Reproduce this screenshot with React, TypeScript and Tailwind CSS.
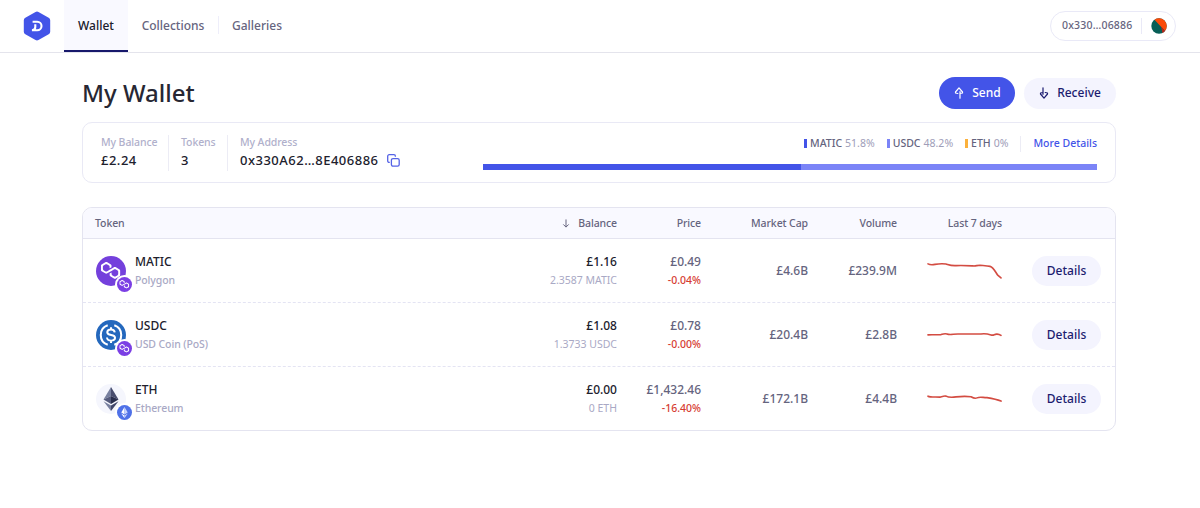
import type { ReactNode } from "react";

type Token = {
  symbol: string;
  name: string;
  balance: string;
  amount: string;
  price: string;
  change: string;
  marketCap: string;
  volume: string;
  chart: string;
  icon: ReactNode;
  badge: ReactNode;
};

const POLYGON_PATH =
  "M29,10.2c-0.7-0.4-1.6-0.4-2.4,0L21,13.5l-3.8,2.1l-5.5,3.3c-0.7,0.4-1.6,0.4-2.4,0L5,16.3c-0.7-0.4-1.2-1.2-1.2-2.1v-5c0-0.8,0.4-1.6,1.2-2.1l4.3-2.5c0.7-0.4,1.6-0.4,2.4,0L16,7.2c0.7,0.4,1.2,1.2,1.2,2.1v3.3l3.8-2.2V7c0-0.8-0.4-1.6-1.2-2.1l-8-4.7c-0.7-0.4-1.6-0.4-2.4,0L1.2,5C0.4,5.4,0,6.2,0,7v9.4c0,0.8,0.4,1.6,1.2,2.1l8.1,4.7c0.7,0.4,1.6,0.4,2.4,0l5.5-3.2l3.8-2.2l5.5-3.2c0.7-0.4,1.6-0.4,2.4,0l4.3,2.5c0.7,0.4,1.2,1.2,1.2,2.1v5c0,0.8-0.4,1.6-1.2,2.1L29,28.8c-0.7,0.4-1.6,0.4-2.4,0l-4.3-2.5c-0.7-0.4-1.2-1.2-1.2-2.1V21l-3.8,2.2v3.3c0,0.8,0.4,1.6,1.2,2.1l8.1,4.7c0.7,0.4,1.6,0.4,2.4,0l8.1-4.7c0.7-0.4,1.2-1.2,1.2-2.1V17c0-0.8-0.4-1.6-1.2-2.1L29,10.2z";

const PolygonIcon = ({ color = "#7440dc" }: { color?: string }) => (
  <svg viewBox="0 0 60 60" className="h-full w-full">
    <circle cx="30" cy="30" r="30" fill={color} />
    <path d={POLYGON_PATH} fill="#fff" transform="translate(10 12)" />
  </svg>
);

const UsdcIcon = () => (
  <svg viewBox="0 0 32 32" className="h-full w-full" fill="none">
    <circle cx="16" cy="16" r="16" fill="#2468bd" />
    <path
      d="M12.5 5.6a11 11 0 0 0 0 20.8M19.5 5.6a11 11 0 0 1 0 20.8"
      stroke="#fff"
      strokeWidth="2.2"
    />
    <path
      d="M20 13.2c-.2-2-1.7-3.1-4-3.1-2.5 0-4 1.2-4 3 0 4.4 8.3 1.6 8.3 5.9 0 1.9-1.7 3-4.2 3-2.6 0-4.2-1.2-4.4-3.3M16 7.6v2.5M16 22v2.6"
      stroke="#fff"
      strokeWidth="2.1"
    />
  </svg>
);

const EthIcon = () => (
  <svg viewBox="0 0 30 30" className="h-full w-full">
    <circle cx="15" cy="15" r="15" fill="#f5f6fd" />
    <path d="M15 3 7.5 15.5 15 12z" fill="#78809f" />
    <path d="M15 3l7.5 12.5L15 12z" fill="#484d6e" />
    <path d="M7.5 15.5 15 12v8z" fill="#555b7c" />
    <path d="M22.5 15.5 15 12v8z" fill="#292e4d" />
    <path d="M7.5 17.2 15 21.6V27z" fill="#78809f" />
    <path d="M22.5 17.2 15 21.6V27z" fill="#40466a" />
  </svg>
);

const EthBadge = () => (
  <svg viewBox="0 0 30 30" className="h-full w-full">
    <circle cx="15" cy="15" r="15" fill="#4f71e8" />
    <path d="M15 4 8.5 15.2 15 19z" fill="#fff" />
    <path d="M15 4l6.5 11.2L15 19z" fill="#c8d3fb" />
    <path d="M8.5 17 15 21v5.5z" fill="#fff" />
    <path d="M21.5 17 15 21v5.5z" fill="#c8d3fb" />
  </svg>
);

const Logo = () => (
  <svg viewBox="0 0 28 30" className="-mt-px h-[30px] w-7" fill="none">
    <path
      d="M14 3.5 24.2 9.3v11.4L14 26.5 3.8 20.7V9.3z"
      fill="#4354e8"
      stroke="#4354e8"
      strokeWidth="6"
      strokeLinejoin="round"
    />
    <path
      d="M9.6 10.7h4.6a4.3 4.3 0 0 1 0 8.600H8.900M12.300 13.200v2.900c0 1.900-1.200 3.200-3.400 3.200"
      stroke="#fff"
      strokeWidth="2.100"
    />
  </svg>
);

const ArrowIcon = ({ down }: { down?: boolean }) => (
  <svg
    viewBox="0 0 10 12"
    className={down ? "h-3 w-2.5 rotate-180" : "h-3 w-2.5"}
    fill="none"
    stroke="currentColor"
    strokeWidth="1.2"
    strokeLinecap="round"
    strokeLinejoin="round"
  >
    <path d="M3.800 6.500 1.500 6V5L5 .9 8.500 5v1L6 6.500M6 4.700v6.500" />
  </svg>
);

const CopyIcon = () => (
  <svg
    viewBox="0 0 13 13"
    className="h-[13px] w-[13px]"
    fill="none"
    stroke="#5563e6"
    strokeWidth="1.3"
    strokeLinejoin="round"
  >
    <rect x="4.4" y="4.6" width="7.8" height="7.6" rx="1.6" />
    <path d="M2.8 8.4H2.2A1.5 1.5 0 0 1 .7 6.9V2.2A1.5 1.5 0 0 1 2.2.7h4.7a1.5 1.5 0 0 1 1.5 1.5v.5" />
  </svg>
);

const tokens: Token[] = [
  {
    symbol: "MATIC",
    name: "Polygon",
    balance: "£1.16",
    amount: "2.3587 MATIC",
    price: "£0.49",
    change: "-0.04%",
    marketCap: "£4.6B",
    volume: "£239.9M",
    chart:
      "M1 8.5C3 9.5 5 9.5 8 9C12 8.3 16 8.3 19 8.6C22 9.5 25 10.5 29 10.2C35 9.8 41 10.2 46 10.5C49 10.8 50 9.8 53 9.8C57 10.2 60 10.3 63 11C67 12 69 18 71 20L74 22.5",
    icon: <PolygonIcon />,
    badge: <PolygonIcon color="#7b3fe4" />,
  },
  {
    symbol: "USDC",
    name: "USD Coin (PoS)",
    balance: "£1.08",
    amount: "1.3733 USDC",
    price: "£0.78",
    change: "-0.00%",
    marketCap: "£20.4B",
    volume: "£2.8B",
    chart:
      "M1 15.5C6 15 10 15.8 14 15.2C16 14.5 18 13.8 20 14.6C23 15.8 26 14.6 31 14.6H54C58 14 61 14.6 64 15.5C67 16.5 67 14.5 70 14.7C72 14.8 73 15.3 74 16",
    icon: <UsdcIcon />,
    badge: <PolygonIcon color="#7b3fe4" />,
  },
  {
    symbol: "ETH",
    name: "Ethereum",
    balance: "£0.00",
    amount: "0 ETH",
    price: "£1,432.46",
    change: "-16.40%",
    marketCap: "£172.1B",
    volume: "£4.4B",
    chart:
      "M1 12.8C3 14 7 13.5 13 13.7C15 13.2 17 12.2 19 12.7C22 14.3 25 14 29 13.5C35 12.8 39 12.8 44 13.3C46 14.5 48 15.5 50 14.5C53 13 56 14.3 60 14.2C65 15 70 16 74 17.7",
    icon: <EthIcon />,
    badge: <EthBadge />,
  },
];

const legend = [
  { symbol: "MATIC", share: "51.8%", dot: "bg-[#4354e8]" },
  { symbol: "USDC", share: "48.2%", dot: "bg-[#7b84f7]" },
  { symbol: "ETH", share: "0%", dot: "bg-[#fbb13c]" },
];

const columns =
  "grid grid-cols-[378px_156px_84px_107px_89px_105px_113px] items-center";

const label =
  "text-[10.5px] leading-[15px] tracking-[-0.1px] text-[#b0b0cb]";

const Header = () => (
  <header className="flex h-[53px] items-center border-b border-[#e4e4ec] px-[23px] pr-6">
    <Logo />
    <nav className="ml-[13px] flex h-full items-start text-xs font-medium text-[#65647e]">
      <a className="flex h-[52px] w-16 items-center justify-center border-b-2 border-[#17186b] bg-[#f9f9ff] pt-0.5 text-[#20202c]">
        Wallet
      </a>
      <a className="flex h-[52px] w-[90px] items-center justify-center">
        Collections
      </a>
      <span className="mt-4 h-[18px] w-px bg-[#eeeefa]" />
      <a className="flex h-[52px] w-[76px] items-center justify-center">
        Galleries
      </a>
    </nav>
    <div className="ml-auto flex h-[30px] w-[126px] items-center rounded-full border border-[#e9e9f7] pl-[11px] text-[10.5px] font-medium text-[#65647e]">
      <span className="w-[79px] tracking-[0.2px]">0x330…06886</span>
      <span className="h-4 w-px bg-[#e9e9f7]" />
      <svg viewBox="0 0 16 16" className="ml-[9px] h-4 w-4">
        <circle cx="8" cy="8" r="7.7" fill="#075e56" />
        <path d="M3.5 1.8A7.7 7.7 0 0 1 14 12.9z" fill="#fb4a08" />
        <path d="M14 12.9A7.7 7.7 0 0 1 11.5 14.9L10 8.5z" fill="#b7261b" />
      </svg>
    </div>
  </header>
);

const Summary = () => (
  <section className="mt-[13px] flex h-[61px] rounded-[10px] border border-[#e9e9f5] px-[18px] pt-3 text-[13px] font-medium text-[#20202c]">
    <div className="h-9 w-[68px] border-r border-[#ececf5] whitespace-nowrap">
      <div className={label}>My Balance</div>
      <div className="leading-5 tracking-[0.5px]">£2.24</div>
    </div>
    <div className="h-9 w-[59px] border-r border-[#ececf5] pl-3">
      <div className={label}>Tokens</div>
      <div className="leading-5">3</div>
    </div>
    <div className="h-9 w-[255px] pl-3">
      <div className={label}>My Address</div>
      <div className="flex items-center leading-5">
        <span className="w-[147px] tracking-[0.5px] whitespace-nowrap">
          0x330A62…8E406886
        </span>
        <CopyIcon />
      </div>
    </div>
    <div className="flex-1">
      <div className="flex items-center justify-end text-[10.5px] leading-[17px]">
        {legend.map((item) => (
          <div key={item.symbol} className="mr-3 flex items-center">
            <span className={`mr-[3px] h-[9px] w-[3px] ${item.dot}`} />
            <span className="text-[#65647e]">{item.symbol}</span>
            <span className="ml-[3px] font-normal text-[#9e9db8]">
              {item.share}
            </span>
          </div>
        ))}
        <span className="mr-3 h-4 w-px bg-[#ececf5]" />
        <a className="text-[#4354e8]">More Details</a>
      </div>
      <div className="mt-3 flex h-1.5 bg-[#7b84f7]">
        <div className="w-[51.8%] bg-[#4354e8]" />
      </div>
    </div>
  </section>
);

const TokenRow = ({ token }: { token: Token }) => (
  <div
    className={`${columns} h-16 border-b border-dashed border-[#e4e4f3] text-right text-xs leading-[18px] font-medium text-[#65647e] last:border-b-0`}
  >
    <div className="flex items-center pl-[13px] text-left">
      <div className="relative h-[30px] w-[30px]">
        {token.icon}
        <div className="absolute top-[19px] left-[19px] h-[19px] w-[19px] rounded-full bg-white p-0.5">
          {token.badge}
        </div>
      </div>
      <div className="ml-[9px]">
        <div className="text-[#20202c]">{token.symbol}</div>
        <div className="text-[10.5px] tracking-[-0.1px] text-[#a9a9c5]">
          {token.name}
        </div>
      </div>
    </div>
    <div>
      <div className="text-[#20202c]">{token.balance}</div>
      <div className="text-[10.5px] font-normal text-[#a9a9c5]">
        {token.amount}
      </div>
    </div>
    <div>
      <div>{token.price}</div>
      <div className="text-[10.5px] text-[#d63c32]">{token.change}</div>
    </div>
    <div>{token.marketCap}</div>
    <div>{token.volume}</div>
    <svg
      viewBox="0 0.6 75 30"
      className="h-[30px] w-[75px] justify-self-end"
      fill="none"
      stroke="#d34c42"
      strokeWidth="1.6"
      strokeLinecap="round"
    >
      <path d={token.chart} />
    </svg>
    <button className="ml-[30px] h-[30px] w-[69px] rounded-full bg-[#f4f4fe] text-[#1c1c70]">
      Details
    </button>
  </div>
);

const TokenTable = () => (
  <section className="mt-6 h-[224px] overflow-hidden rounded-[10px] border border-[#e4e4f0]">
    <div
      className={`${columns} h-[31px] border-b border-[#e4e4f0] bg-[#f9f9ff] pt-px text-right text-[10.5px] font-medium tracking-[-0.1px] text-[#65647e]`}
    >
      <div className="pl-3 text-left">Token</div>
      <div className="flex items-center justify-end">
        <svg
          viewBox="0 0 8 10"
          className="mr-2 h-[9px] w-2"
          fill="none"
          stroke="currentColor"
          strokeWidth="1.1"
        >
          <path d="M4 .5v8.5M1 6l3 3 3-3" />
        </svg>
        Balance
      </div>
      <div>Price</div>
      <div>Market Cap</div>
      <div>Volume</div>
      <div>Last 7 days</div>
    </div>
    {tokens.map((token) => (
      <TokenRow key={token.symbol} token={token} />
    ))}
  </section>
);

const App = () => {
  return (
    <div className="h-[508px] w-[1200px] overflow-hidden bg-white font-['Noto_Sans',sans-serif]">
      <Header />
      <main className="ml-[82px] w-[1034px] pt-6">
        <div className="flex h-8 items-center">
          <h1 className="text-2xl font-medium text-[#272733]">My Wallet</h1>
          <button className="ml-auto flex h-8 w-[76px] items-center justify-center gap-2 rounded-full bg-[#4354e8] pl-px text-xs font-medium text-white">
            <ArrowIcon />
            Send
          </button>
          <button className="ml-[9px] flex h-[31px] w-[92px] items-center justify-center gap-2 rounded-full bg-[#f4f4fe] text-xs font-medium text-[#1c1c70]">
            <ArrowIcon down />
            Receive
          </button>
        </div>
        <Summary />
        <TokenTable />
      </main>
    </div>
  );
};

export default App;
